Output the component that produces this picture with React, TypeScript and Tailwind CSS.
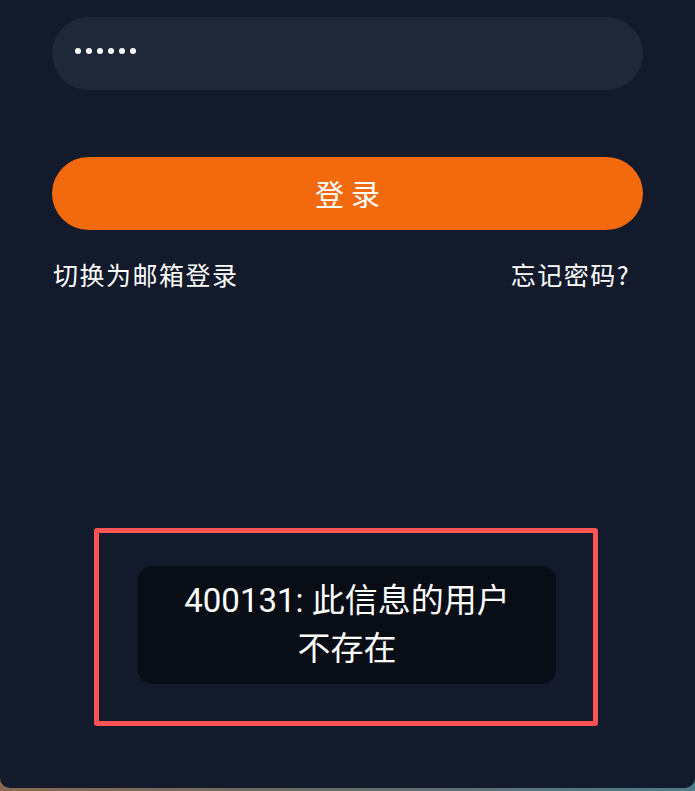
import React from "react";

export default function App() {
  const cjk = { fontFamily: "'Noto Sans CJK SC', 'Noto Sans', sans-serif" };
  return (
    <div className="w-full h-[791px] bg-[linear-gradient(to_right,#8a6a52_0%,#6e6a5e_35%,#5b6f73_65%,#4c7c86_100%)] overflow-hidden">
      <div
        className="h-[788px] w-full bg-[#121a2c] rounded-b-[10px] px-[52px] pt-[17px] flex flex-col"
        style={cjk}
      >
        <div className="h-[73px] rounded-full bg-[#1f2839] flex items-center pl-[23px] pb-[5px] gap-[5px]">
          {[0, 1, 2, 3, 4, 5].map((i) => (
            <div key={i} className="w-[6px] h-[6px] rounded-full bg-white" />
          ))}
        </div>

        <button className="mt-[67px] h-[73px] rounded-full bg-[#f2690e] text-white text-[29px] leading-none tracking-[7px] pl-[7px] flex items-center justify-center">
          登录
        </button>

        <div className="mt-[27px] flex justify-between items-center text-white text-[25px] leading-[34px] tracking-[1.5px] pl-[1px] pr-[13px]">
          <span>切换为邮箱登录</span>
          <span>忘记密码?</span>
        </div>

        <div className="mt-[237px] self-start ml-[42px] w-[504px] h-[198px] border-[5px] border-[#ff5454] rounded-[3px] flex items-center justify-center">
          <div className="w-[418px] h-[118px] rounded-[14px] bg-[#090d15] flex items-center justify-center mt-[-4px] ml-[2px]">
            <p
              className="w-[345px] text-center text-white text-[33px] leading-[48px]"
              style={{ fontFamily: "Roboto, 'Noto Sans CJK SC', sans-serif" }}
            >
              400131: 此信息的用户不存在
            </p>
          </div>
        </div>
      </div>
    </div>
  );
}
